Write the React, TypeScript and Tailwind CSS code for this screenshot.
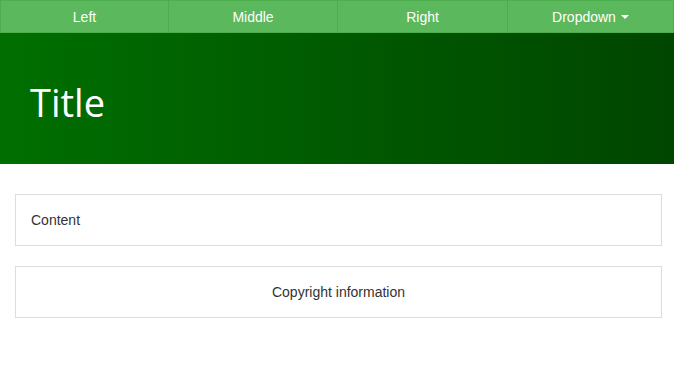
import React from 'react';

const navItems = [
  { label: 'Left', width: 'w-[168px]' },
  { label: 'Middle', width: 'w-[169px]' },
  { label: 'Right', width: 'w-[170px]' },
];

const App: React.FC = () => {
  return (
    <div className="w-[674px] h-[384px] bg-white font-['Liberation_Sans',Arial,sans-serif] text-[14px] text-[#333]">
      <nav className="flex h-[33px] border border-[#4cae4c] bg-[#5cb85c] text-white">
        {navItems.map((item) => (
          <a key={item.label} className={`${item.width} flex items-center justify-center pt-px border-r border-[#4cae4c]`}>
            {item.label}
          </a>
        ))}
        <a className="flex-1 flex items-center justify-center gap-[5px] pt-px">
          Dropdown
          <span className="inline-block w-0 h-0 border-x-[4px] border-x-transparent border-t-[4px] border-t-white" />
        </a>
      </nav>

      <header className="h-[131px] flex items-center px-[30px] bg-gradient-to-r from-[#006f00] to-[#004600]">
        <h1 className="font-['Open_Sans',sans-serif] text-[38px] leading-none text-white pt-[6px]">Title</h1>
      </header>

      <main className="flex flex-col gap-[20px] mt-[30px] ml-[15px] w-[647px]">
        <div className="border border-[#ddd] px-[15px] py-[15px] leading-[20px]">Content</div>
        <footer className="border border-[#ddd] px-[15px] py-[15px] leading-[20px] text-center">
          Copyright information
        </footer>
      </main>
    </div>
  );
};

export default App;
